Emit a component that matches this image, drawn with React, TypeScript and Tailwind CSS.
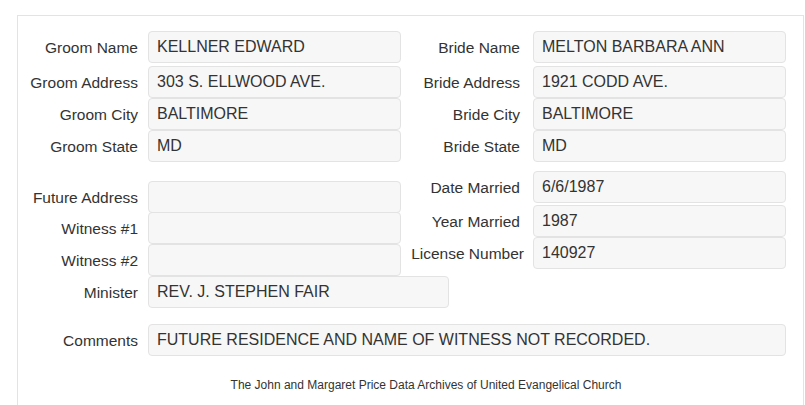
import React from "react"

type FieldProps = {
  label: string
  value?: string
  labelClass?: string
  boxClass?: string
}

// one label + readonly value box
function Field({ label, value = "", labelClass = "w-[120px]", boxClass = "ml-[10px] w-[253px]" }: FieldProps) {
  return (
    <div className="flex h-[32px] items-stretch">
      <div className={`flex shrink-0 items-center justify-end whitespace-nowrap pt-[2px] text-right text-[15.5px] text-[#333] ${labelClass}`}>
        {label}
      </div>
      <div className={`flex shrink-0 items-center rounded-[4px] border border-[#e3e3e3] bg-[#f7f7f7] px-[8px] text-[16px] text-[#333] whitespace-nowrap ${boxClass}`}>
        {value}
      </div>
    </div>
  )
}

const top = [
  { g: ["Groom Name", "KELLNER EDWARD"], b: ["Bride Name", "MELTON BARBARA ANN"], cls: "" },
  { g: ["Groom Address", "303 S. ELLWOOD AVE."], b: ["Bride Address", "1921 CODD AVE."], cls: "mt-[3px]" },
  { g: ["Groom City", "BALTIMORE"], b: ["Bride City", "BALTIMORE"], cls: "" },
  { g: ["Groom State", "MD"], b: ["Bride State", "MD"], cls: "" },
]

export default function App() {
  return (
    <div className="h-[405px] w-[805px] overflow-hidden bg-white pl-[17px] pr-[1px] pt-[15px]" style={{ fontFamily: '"Liberation Sans", Arial, sans-serif' }}>
      <div className="h-full border border-b-0 border-[#e3e3e3] pt-[15px]">
        <div className="flex flex-col">
          {top.map((r) => (
            <div key={r.g[0]} className={`flex ${r.cls}`}>
              <div className="w-[382px] shrink-0">
                <Field label={r.g[0]} value={r.g[1]} />
              </div>
              <Field label={r.b[0]} value={r.b[1]} boxClass="ml-[13px] w-[253px]" />
            </div>
          ))}
        </div>

        <div className="mt-[9px] flex">
          <div className="flex w-[382px] shrink-0 flex-col pt-[10px]">
            <Field label="Future Address" />
            <div className="-mt-px">
              <Field label="Witness #1" />
            </div>
            <Field label="Witness #2" />
            <Field label="Minister" value="REV. J. STEPHEN FAIR" boxClass="ml-[10px] w-[301px]" />
          </div>
          <div className="flex flex-col">
            <Field label="Date Married" value="6/6/1987" boxClass="ml-[13px] w-[253px]" />
            <div className="mt-[2px]">
              <Field label="Year Married" value="1987" boxClass="ml-[13px] w-[253px]" />
            </div>
            <Field label="License Number" value="140927" labelClass="w-[124px]" boxClass="ml-[9px] w-[253px]" />
          </div>
        </div>

        <div className="mt-[16px]">
          <Field label="Comments" value="FUTURE RESIDENCE AND NAME OF WITNESS NOT RECORDED." boxClass="ml-[10px] w-[638px]" />
        </div>

        <p className="mt-[20px] pl-[31px] text-center text-[12px] text-[#333]">
          The John and Margaret Price Data Archives of United Evangelical Church
        </p>
      </div>
    </div>
  )
}
